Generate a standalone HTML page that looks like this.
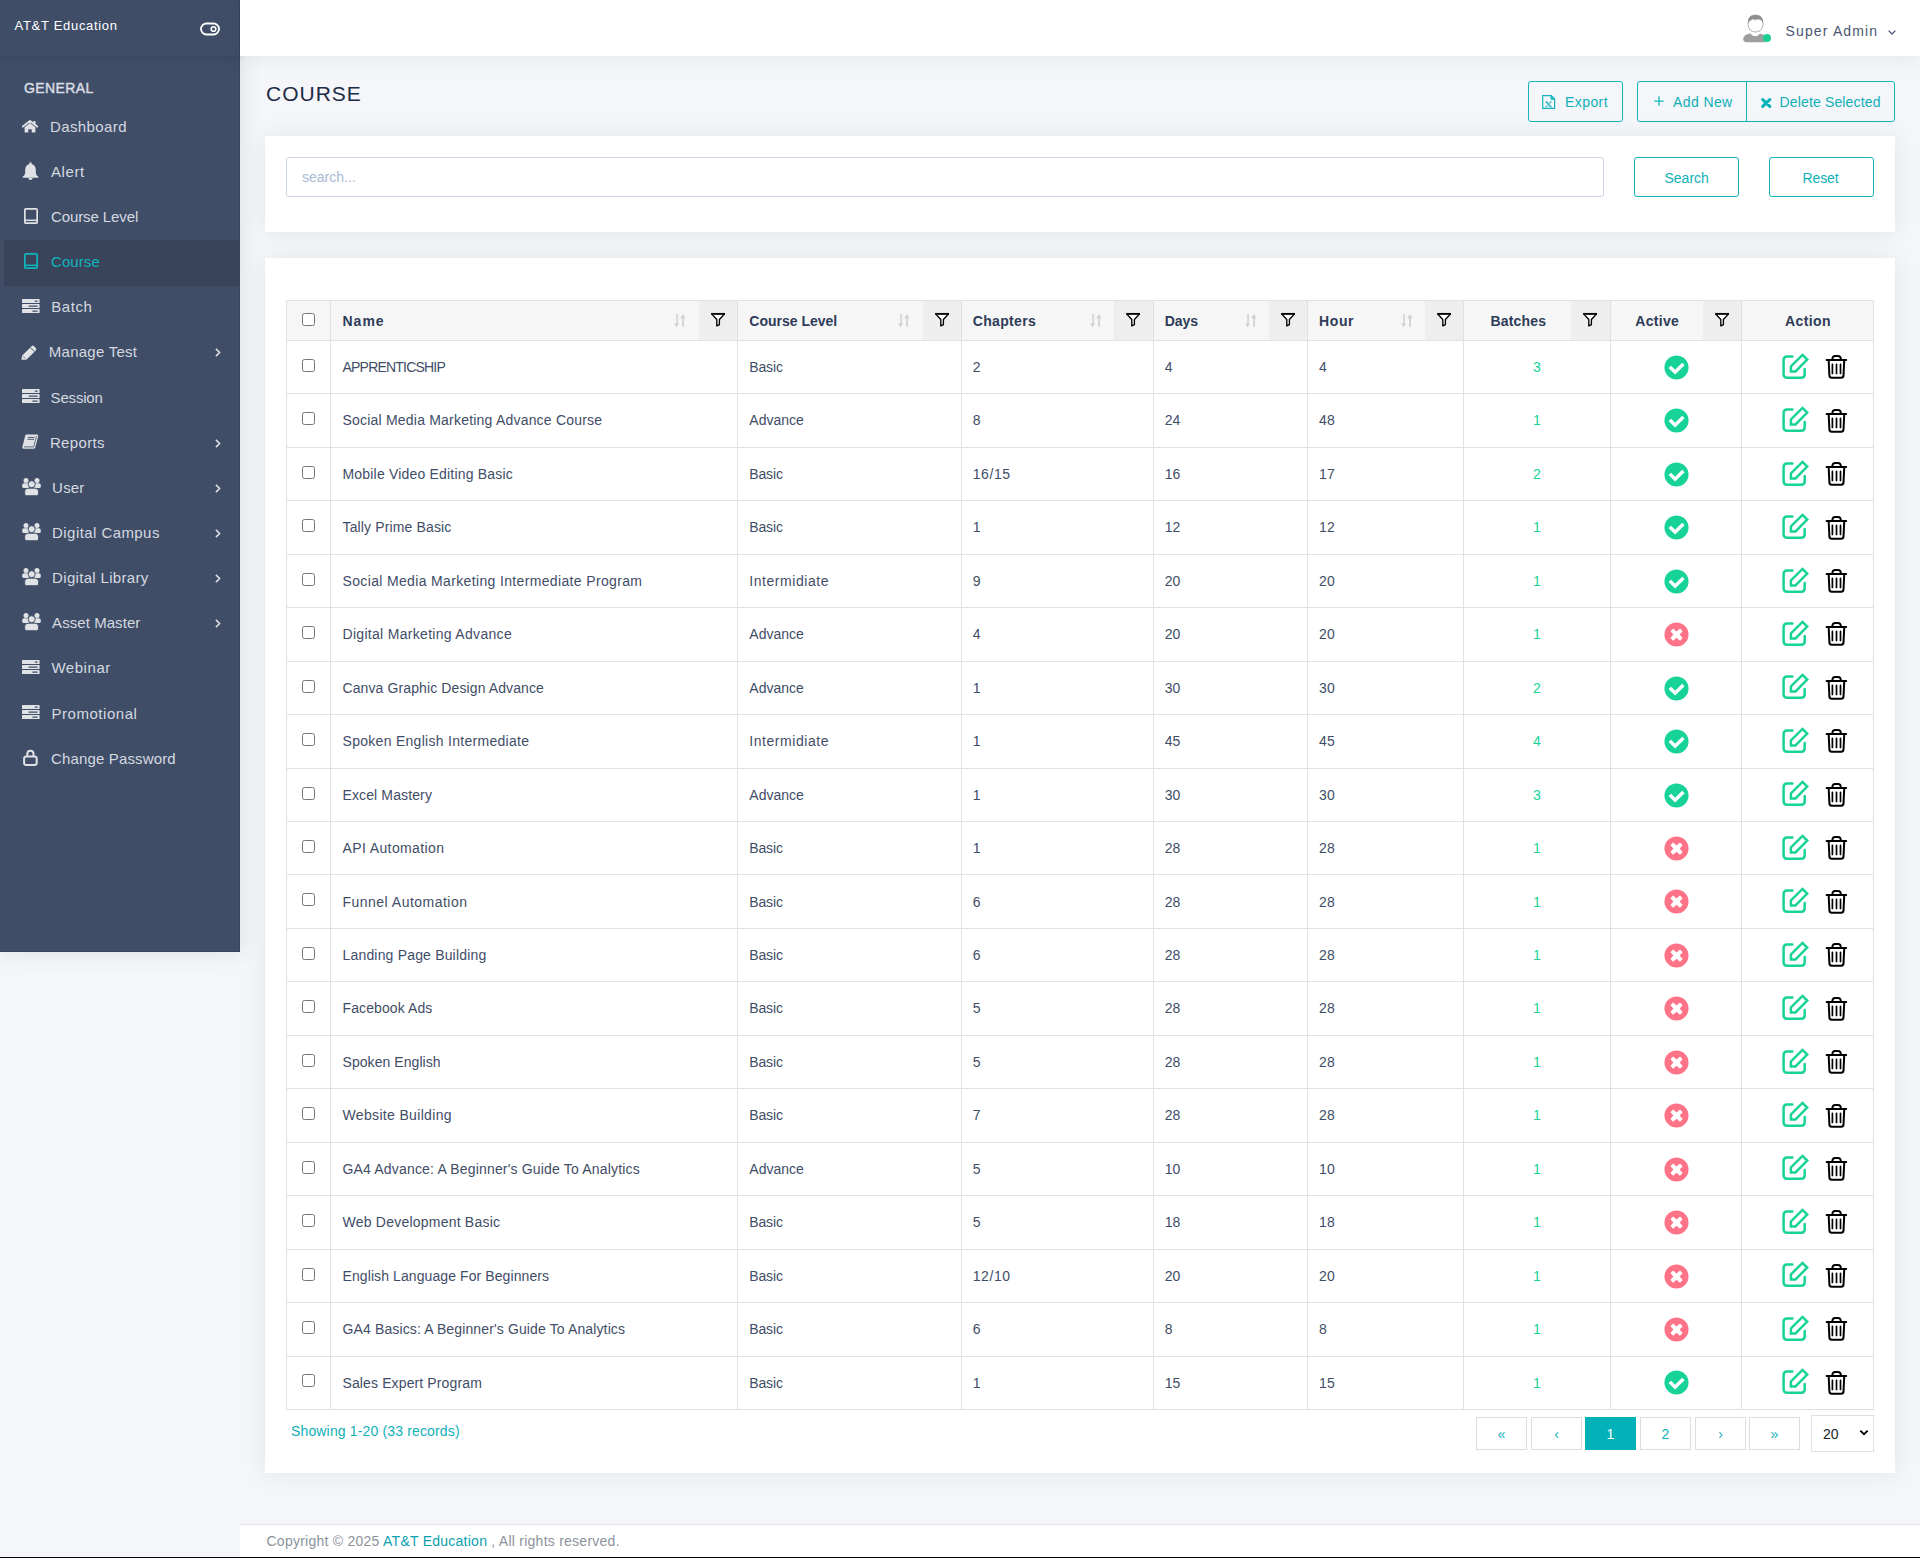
<!DOCTYPE html>
<html><head><meta charset="utf-8">
<style>
*{box-sizing:border-box;margin:0;padding:0}
html,body{width:1920px;height:1558px;overflow:hidden;-webkit-font-smoothing:antialiased}
body{background:#f4f6f9;font-family:"Liberation Sans",sans-serif;position:relative;color:#3f4d67}
.sb{position:absolute;left:0;top:0;width:240px;height:952px;background:#3f4d67;border-right:1px solid #38445d;border-bottom:1px solid #38445d;box-shadow:1px 0 20px 0 rgba(69,90,100,0.14)}
.sbhead{position:absolute;left:0;top:0;width:239px;height:56px;box-shadow:0 2px 6px rgba(40,50,70,0.25)}
.brand{position:absolute;left:14.6px;top:18px;font-size:13px;color:#fff;white-space:nowrap;letter-spacing:0.69px}
.tog{position:absolute;left:200px;top:22px}
.cap{position:absolute;left:24px;top:80px;font-size:14px;font-weight:normal;color:#d9dde4;letter-spacing:0.4px;-webkit-text-stroke:0.45px #d9dde4}
.ntx{position:absolute;font-size:15px;line-height:19px;white-space:nowrap;letter-spacing:0.2px}
.hdr{position:absolute;left:240px;top:0;width:1680px;height:56px;background:#fff;box-shadow:0 1px 20px rgba(69,90,100,0.10)}
.title{position:absolute;left:266px;top:82px;font-size:21px;color:#1e2b45;letter-spacing:1.0px}
.uname{position:absolute;left:1785.5px;top:23px;font-size:14px;color:#4a5672;letter-spacing:1.15px;white-space:nowrap}
.bt{position:absolute;font-size:14px;line-height:16px;color:#0fb0b8;white-space:nowrap;letter-spacing:0.25px}
.btn{position:absolute;border:1px solid #12b5bc;border-radius:3px;color:#0fb0b8;font-size:14px;background:transparent;white-space:nowrap}
.card{position:absolute;left:265px;width:1630px;background:#fff;box-shadow:0 1px 20px rgba(69,90,100,0.10)}
.inp{position:absolute;left:21px;top:21px;width:1318px;height:40px;border:1px solid #c9d5e4;border-radius:3px}
.inp span{position:absolute;left:15px;top:11px;font-size:14px;color:#a8bad3}
.th{position:absolute;top:312px;font-size:14px;line-height:18px;font-weight:bold;color:#2e3c58;white-space:nowrap}
.td{position:absolute;font-size:14px;line-height:18px;color:#3f4d67;white-space:nowrap}
.bn{width:100px;text-align:center;color:#17d397}
.cb{position:absolute;left:302px;width:13px;height:13px;margin:0}
.show{position:absolute;left:291px;top:1422px;font-size:14px;line-height:18px;color:#0fb0b8;white-space:nowrap;letter-spacing:0.15px}
.pg{position:absolute;top:1417px;width:51px;height:33px;border:1px solid #dee2e6;background:#fff;color:#0fb0b8;font-size:14px;line-height:33px;text-align:center;border-color:#dcdddf}
.pg.act{background:#03b1b9;border-color:#03b1b9;color:#fff}
.sel{position:absolute;left:1811px;top:1415px;width:63px;height:37px;border:1px solid #dee2e6;background:#fff}
.sel span{position:absolute;left:11px;top:9px;font-size:14px;line-height:18px;color:#212529}
.footer{position:absolute;left:240px;top:1524px;width:1680px;height:33px;background:#fff;border-top:1px solid #e3e6eb}
.footer span{position:absolute;left:26.5px;top:8px;font-size:14px;color:#8c939c;white-space:nowrap;letter-spacing:0.25px}
.footer a{color:#0b9fb0;text-decoration:none}
.bline{position:absolute;left:0;top:1557px;width:1920px;height:1px;background:#000}
</style></head>
<body>
<div class="sb">
  <div class="sbhead"></div>
  <div class="brand">AT&amp;T Education</div>
  <svg class="tog" width="20" height="14" viewBox="0 0 20 14"><rect x="1" y="1.5" width="18" height="11" rx="5.5" fill="none" stroke="#fff" stroke-width="1.8"/><circle cx="13.5" cy="7" r="2.3" fill="none" stroke="#fff" stroke-width="1.6"/></svg>
  <div class="cap">GENERAL</div>
  <svg class="ic" style="position:absolute;left:22px;top:119.6px" width="16" height="13" viewBox="0 0 16 13"><path d="M0.8 6.6 L8 0.9 L15.2 6.6" fill="none" stroke="#e0e2e6" stroke-width="1.9" stroke-linecap="round" stroke-linejoin="round"/><rect x="11.3" y="1" width="2.2" height="3.6" fill="#e0e2e6"/><path d="M2.6 7.3 L8 3 L13.4 7.3 V12.6 H9.7 V9.3 H6.3 V12.6 H2.6 Z" fill="#e0e2e6"/></svg>
<div class="ntx" style="left:50px;top:116.6px;color:#d5d9e0;letter-spacing:0.39px">Dashboard</div>
<svg class="ic" style="position:absolute;left:22px;top:162px" width="17" height="18" viewBox="0 0 17 18"><path d="M8.5 0.3c.7 0 1.1.5 1.1 1.1v.7c2.5.6 4.2 2.8 4.2 5.4v3c0 1.3.6 2.5 1.6 3.4l.8.7c.4.4.2 1.1-.4 1.1H1.2c-.6 0-.8-.7-.4-1.1l.8-.7c1-.9 1.6-2.1 1.6-3.4v-3c0-2.6 1.7-4.8 4.2-5.4v-.7c0-.6.4-1.1 1.1-1.1z" fill="#e0e2e6"/><path d="M6.4 15.9h4.2c0 1.2-.9 2-2.1 2s-2.1-.8-2.1-2z" fill="#e0e2e6"/></svg>
<div class="ntx" style="left:51px;top:161.8px;color:#d5d9e0;letter-spacing:0.6px">Alert</div>
<svg class="ic" style="position:absolute;left:24px;top:207.8px" width="14" height="16" viewBox="0 0 14 16"><rect x="0.85" y="0.85" width="12.3" height="14.3" rx="1" fill="none" stroke="#e0e2e6" stroke-width="1.7"/><path d="M0.85 12.3 H13.15" stroke="#e0e2e6" stroke-width="1.5"/></svg>
<div class="ntx" style="left:51px;top:206.9px;color:#d5d9e0;letter-spacing:-0.1px">Course Level</div>
<div style="position:absolute;left:4px;top:240px;width:235px;height:46px;background:#394359"></div>
<svg class="ic" style="position:absolute;left:24px;top:253px" width="14" height="16" viewBox="0 0 14 16"><rect x="0.85" y="0.85" width="12.3" height="14.3" rx="1" fill="none" stroke="#0fb5bd" stroke-width="1.7"/><path d="M0.85 12.3 H13.15" stroke="#0fb5bd" stroke-width="1.5"/></svg>
<div class="ntx" style="left:51px;top:252.0px;color:#0fb5bd;letter-spacing:0.08px">Course</div>
<svg class="ic" style="position:absolute;left:21.7px;top:299px" width="18" height="14" viewBox="0 0 18 14"><rect x="0" y="0" width="17.6" height="4.1" rx="0.7" fill="#e0e2e6"/><rect x="0" y="5" width="17.6" height="4.1" rx="0.7" fill="#e0e2e6"/><rect x="0" y="10" width="17.6" height="4.1" rx="0.7" fill="#e0e2e6"/><rect x="12.6" y="1.5" width="3.2" height="1.2" rx="0.6" fill="#3f4d67"/><rect x="6.4" y="6.5" width="9.4" height="1.2" rx="0.6" fill="#3f4d67"/><rect x="10.2" y="11.5" width="5.6" height="1.2" rx="0.6" fill="#3f4d67"/></svg>
<div class="ntx" style="left:51.3px;top:297.2px;color:#d5d9e0;letter-spacing:0.55px">Batch</div>
<svg class="ic" style="position:absolute;left:21.4px;top:344.7px" width="16" height="15" viewBox="0 0 16 15"><path d="M0.3 14.7 L1.2 10.6 L10.6 1.2 Q11.8 0 13 1.2 L14.8 3 Q16 4.2 14.8 5.4 L5.4 14.8 Z" fill="#e0e2e6"/><path d="M9.4 2.6 L13.4 6.6" stroke="#3f4d67" stroke-width="0.9"/><path d="M2.2 11.2 L4.4 13.4" stroke="#3f4d67" stroke-width="0.6"/></svg>
<div class="ntx" style="left:48.8px;top:342.4px;color:#d5d9e0;letter-spacing:0.25px">Manage Test</div>
<svg class="ch" style="position:absolute;left:214.5px;top:348.2px" width="6" height="9" viewBox="0 0 6 9"><path d="M0.9 0.9 L4.6 4.5 L0.9 8.1" fill="none" stroke="#e0e2e6" stroke-width="1.5"/></svg>
<svg class="ic" style="position:absolute;left:21.7px;top:389.3px" width="18" height="14" viewBox="0 0 18 14"><rect x="0" y="0" width="17.6" height="4.1" rx="0.7" fill="#e0e2e6"/><rect x="0" y="5" width="17.6" height="4.1" rx="0.7" fill="#e0e2e6"/><rect x="0" y="10" width="17.6" height="4.1" rx="0.7" fill="#e0e2e6"/><rect x="12.6" y="1.5" width="3.2" height="1.2" rx="0.6" fill="#3f4d67"/><rect x="6.4" y="6.5" width="9.4" height="1.2" rx="0.6" fill="#3f4d67"/><rect x="10.2" y="11.5" width="5.6" height="1.2" rx="0.6" fill="#3f4d67"/></svg>
<div class="ntx" style="left:50.6px;top:387.5px;color:#d5d9e0;letter-spacing:-0.18px">Session</div>
<svg class="ic" style="position:absolute;left:21.7px;top:434px" width="17" height="15" viewBox="0 0 17 15"><path d="M4.6 0.4 H14.8 Q16.6 0.6 16.2 2.4 L13.2 13.6 Q12.8 14.8 11.4 14.8 H1.6 Q0 14.6 0.4 12.8 L3.3 1.6 Q3.6 0.5 4.6 0.4Z" fill="#e0e2e6"/><path d="M5.9 3.4 H12.6 M5.4 5.3 H12" stroke="#3f4d67" stroke-width="0.9"/><path d="M2.1 12.9 H11.6 L14.6 2" fill="none" stroke="#3f4d67" stroke-width="0.8"/></svg>
<div class="ntx" style="left:49.9px;top:432.7px;color:#d5d9e0;letter-spacing:0.36px">Reports</div>
<svg class="ch" style="position:absolute;left:214.5px;top:438.6px" width="6" height="9" viewBox="0 0 6 9"><path d="M0.9 0.9 L4.6 4.5 L0.9 8.1" fill="none" stroke="#e0e2e6" stroke-width="1.5"/></svg>
<svg class="ic" style="position:absolute;left:21.5px;top:478px" width="20" height="18" viewBox="0 0 20 18"><circle cx="4" cy="2.5" r="2.5" fill="#e0e2e6"/><circle cx="15" cy="2.5" r="2.5" fill="#e0e2e6"/><path d="M0.2 7 Q0.2 5.2 2 5.2 H7 V9.9 H1.7 Q0.2 9.9 0.2 8.4Z" fill="#e0e2e6"/><path d="M18.8 7 Q18.8 5.2 17 5.2 H12 V9.9 H17.3 Q18.8 9.9 18.8 8.4Z" fill="#e0e2e6"/><circle cx="9.7" cy="6.2" r="3.5" fill="#e0e2e6" stroke="#3f4d67" stroke-width="0.9"/><path d="M2.7 15.9 V13.5 Q2.7 10.2 6 10.2 H13.2 Q16.5 10.2 16.5 13.5 V15.9 Q16.5 17.7 14.7 17.7 H4.5 Q2.7 17.7 2.7 15.9Z" fill="#e0e2e6" stroke="#3f4d67" stroke-width="0.9"/></svg>
<div class="ntx" style="left:52.1px;top:477.8px;color:#d5d9e0;letter-spacing:0.2px">User</div>
<svg class="ch" style="position:absolute;left:214.5px;top:483.7px" width="6" height="9" viewBox="0 0 6 9"><path d="M0.9 0.9 L4.6 4.5 L0.9 8.1" fill="none" stroke="#e0e2e6" stroke-width="1.5"/></svg>
<svg class="ic" style="position:absolute;left:21.5px;top:523.1px" width="20" height="18" viewBox="0 0 20 18"><circle cx="4" cy="2.5" r="2.5" fill="#e0e2e6"/><circle cx="15" cy="2.5" r="2.5" fill="#e0e2e6"/><path d="M0.2 7 Q0.2 5.2 2 5.2 H7 V9.9 H1.7 Q0.2 9.9 0.2 8.4Z" fill="#e0e2e6"/><path d="M18.8 7 Q18.8 5.2 17 5.2 H12 V9.9 H17.3 Q18.8 9.9 18.8 8.4Z" fill="#e0e2e6"/><circle cx="9.7" cy="6.2" r="3.5" fill="#e0e2e6" stroke="#3f4d67" stroke-width="0.9"/><path d="M2.7 15.9 V13.5 Q2.7 10.2 6 10.2 H13.2 Q16.5 10.2 16.5 13.5 V15.9 Q16.5 17.7 14.7 17.7 H4.5 Q2.7 17.7 2.7 15.9Z" fill="#e0e2e6" stroke="#3f4d67" stroke-width="0.9"/></svg>
<div class="ntx" style="left:52.1px;top:522.9px;color:#d5d9e0;letter-spacing:0.43px">Digital Campus</div>
<svg class="ch" style="position:absolute;left:214.5px;top:528.8px" width="6" height="9" viewBox="0 0 6 9"><path d="M0.9 0.9 L4.6 4.5 L0.9 8.1" fill="none" stroke="#e0e2e6" stroke-width="1.5"/></svg>
<svg class="ic" style="position:absolute;left:21.5px;top:568.3px" width="20" height="18" viewBox="0 0 20 18"><circle cx="4" cy="2.5" r="2.5" fill="#e0e2e6"/><circle cx="15" cy="2.5" r="2.5" fill="#e0e2e6"/><path d="M0.2 7 Q0.2 5.2 2 5.2 H7 V9.9 H1.7 Q0.2 9.9 0.2 8.4Z" fill="#e0e2e6"/><path d="M18.8 7 Q18.8 5.2 17 5.2 H12 V9.9 H17.3 Q18.8 9.9 18.8 8.4Z" fill="#e0e2e6"/><circle cx="9.7" cy="6.2" r="3.5" fill="#e0e2e6" stroke="#3f4d67" stroke-width="0.9"/><path d="M2.7 15.9 V13.5 Q2.7 10.2 6 10.2 H13.2 Q16.5 10.2 16.5 13.5 V15.9 Q16.5 17.7 14.7 17.7 H4.5 Q2.7 17.7 2.7 15.9Z" fill="#e0e2e6" stroke="#3f4d67" stroke-width="0.9"/></svg>
<div class="ntx" style="left:52.1px;top:568.1px;color:#d5d9e0;letter-spacing:0.32px">Digital Library</div>
<svg class="ch" style="position:absolute;left:214.5px;top:574.0px" width="6" height="9" viewBox="0 0 6 9"><path d="M0.9 0.9 L4.6 4.5 L0.9 8.1" fill="none" stroke="#e0e2e6" stroke-width="1.5"/></svg>
<svg class="ic" style="position:absolute;left:21.5px;top:613.4px" width="20" height="18" viewBox="0 0 20 18"><circle cx="4" cy="2.5" r="2.5" fill="#e0e2e6"/><circle cx="15" cy="2.5" r="2.5" fill="#e0e2e6"/><path d="M0.2 7 Q0.2 5.2 2 5.2 H7 V9.9 H1.7 Q0.2 9.9 0.2 8.4Z" fill="#e0e2e6"/><path d="M18.8 7 Q18.8 5.2 17 5.2 H12 V9.9 H17.3 Q18.8 9.9 18.8 8.4Z" fill="#e0e2e6"/><circle cx="9.7" cy="6.2" r="3.5" fill="#e0e2e6" stroke="#3f4d67" stroke-width="0.9"/><path d="M2.7 15.9 V13.5 Q2.7 10.2 6 10.2 H13.2 Q16.5 10.2 16.5 13.5 V15.9 Q16.5 17.7 14.7 17.7 H4.5 Q2.7 17.7 2.7 15.9Z" fill="#e0e2e6" stroke="#3f4d67" stroke-width="0.9"/></svg>
<div class="ntx" style="left:52.1px;top:613.2px;color:#d5d9e0;letter-spacing:0.06px">Asset Master</div>
<svg class="ch" style="position:absolute;left:214.5px;top:619.1px" width="6" height="9" viewBox="0 0 6 9"><path d="M0.9 0.9 L4.6 4.5 L0.9 8.1" fill="none" stroke="#e0e2e6" stroke-width="1.5"/></svg>
<svg class="ic" style="position:absolute;left:21.7px;top:660.2px" width="18" height="14" viewBox="0 0 18 14"><rect x="0" y="0" width="17.6" height="4.1" rx="0.7" fill="#e0e2e6"/><rect x="0" y="5" width="17.6" height="4.1" rx="0.7" fill="#e0e2e6"/><rect x="0" y="10" width="17.6" height="4.1" rx="0.7" fill="#e0e2e6"/><rect x="12.6" y="1.5" width="3.2" height="1.2" rx="0.6" fill="#3f4d67"/><rect x="6.4" y="6.5" width="9.4" height="1.2" rx="0.6" fill="#3f4d67"/><rect x="10.2" y="11.5" width="5.6" height="1.2" rx="0.6" fill="#3f4d67"/></svg>
<div class="ntx" style="left:51.4px;top:658.4px;color:#d5d9e0;letter-spacing:0.55px">Webinar</div>
<svg class="ic" style="position:absolute;left:21.7px;top:705.3px" width="18" height="14" viewBox="0 0 18 14"><rect x="0" y="0" width="17.6" height="4.1" rx="0.7" fill="#e0e2e6"/><rect x="0" y="5" width="17.6" height="4.1" rx="0.7" fill="#e0e2e6"/><rect x="0" y="10" width="17.6" height="4.1" rx="0.7" fill="#e0e2e6"/><rect x="12.6" y="1.5" width="3.2" height="1.2" rx="0.6" fill="#3f4d67"/><rect x="6.4" y="6.5" width="9.4" height="1.2" rx="0.6" fill="#3f4d67"/><rect x="10.2" y="11.5" width="5.6" height="1.2" rx="0.6" fill="#3f4d67"/></svg>
<div class="ntx" style="left:51.4px;top:703.5px;color:#d5d9e0;letter-spacing:0.55px">Promotional</div>
<svg class="ic" style="position:absolute;left:23.1px;top:749.4px" width="15" height="17" viewBox="0 0 15 17"><rect x="1.1" y="7.5" width="12.6" height="8.4" rx="2.2" fill="none" stroke="#e0e2e6" stroke-width="2"/><path d="M4.3 7.5 V4.8 A3.1 3.1 0 0 1 10.5 4.8 V7.5" fill="none" stroke="#e0e2e6" stroke-width="2"/></svg>
<div class="ntx" style="left:51px;top:748.7px;color:#d5d9e0;letter-spacing:0.15px">Change Password</div>
</div>
<div class="hdr"></div>
<svg style="position:absolute;left:1742px;top:14px" width="30" height="30" viewBox="0 0 30 30">
 <path d="M1.2 24.2 Q3 20 8.5 19.6 Q10 22.2 13.3 22.2 Q16.6 22.2 18 19.6 Q21.5 19.9 23 22.5 V28.2 H4.5 Q2.2 28.2 1.2 26Z" fill="#9e9e9e"/>
 <path d="M6.3 8.5 Q6.3 1 13.5 1 Q20.7 1 20.7 8.5 Q21.6 9 21 10.6 Q20.2 16.5 16.5 17.4 Q13.5 18.7 10.5 17.4 Q7 16.5 6.1 10.6 Q5.4 9 6.3 8.5Z" fill="#fff" stroke="#777" stroke-width="0.6"/>
 <path d="M5.9 9.8 Q5.2 1 13.5 0.9 Q21.7 1 21.1 9.8 Q20.2 6.8 18.6 6 Q17 4.6 15.6 5.8 Q14.4 4.4 13.2 6.4 Q11 4.2 9.2 6.3 Q7 7 5.9 9.8Z" fill="#8f8f8f"/>
 <circle cx="25" cy="24" r="4" fill="#1ccf8f"/>
</svg>
<div class="uname">Super Admin</div>
<svg style="position:absolute;left:1888px;top:30px" width="8" height="5" viewBox="0 0 8 5"><path d="M0.6 0.6 L4 4 L7.4 0.6" fill="none" stroke="#4a5672" stroke-width="1.3"/></svg>
<div class="title">COURSE</div>
<div class="btn" style="left:1528px;top:81px;width:95px;height:41px"></div>
<svg style="position:absolute;left:1542px;top:95px" width="14" height="14" viewBox="0 0 14 14"><path d="M0.7 0.7 H9.3 L12.6 4 V13.3 H0.7 Z" fill="none" stroke="#12b5bc" stroke-width="1.2"/><path d="M9 0.7 V4.3 H12.6" fill="none" stroke="#12b5bc" stroke-width="1"/><path d="M9.2 1 L12.3 4.1 L9.2 4.1Z" fill="#12b5bc"/><path d="M4.3 6.9 L8.9 11.7" stroke="#12b5bc" stroke-width="1.3"/><path d="M8.7 6.9 L4.3 11.7" stroke="#12b5bc" stroke-width="0.9"/><path d="M3.2 6.9 H5.6 M7.7 6.9 H9.8 M3.2 11.7 H5.4 M7.6 11.7 H10" stroke="#12b5bc" stroke-width="0.8"/></svg>
<div class="bt" style="left:1565px;top:94px;letter-spacing:0.42px">Export</div>
<div class="btn" style="left:1637px;top:81px;width:258px;height:41px"></div>
<div style="position:absolute;left:1746px;top:81px;width:1px;height:41px;background:#12b5bc"></div>
<svg style="position:absolute;left:1654px;top:96px" width="10" height="10" viewBox="0 0 10 10"><path d="M5 0.3 V9.7 M0.3 5 H9.7" stroke="#12b5bc" stroke-width="1.25"/></svg>
<div class="bt" style="left:1673px;top:94px;letter-spacing:0.4px">Add New</div>
<svg style="position:absolute;left:1761px;top:97.5px" width="10.5" height="10" viewBox="0 0 10.5 10"><path d="M1.7 1.6 L8.8 8.4 M8.8 1.6 L1.7 8.4" stroke="#04b4b9" stroke-width="3" stroke-linecap="round"/></svg>
<div class="bt" style="left:1779.5px;top:94px;letter-spacing:0.15px">Delete Selected</div>
<div class="card" style="top:136px;height:96px">
  <div class="inp"><span>search...</span></div>
  <div class="btn" style="left:1369px;top:21px;width:105px;height:40px;color:#0fb0b8"><div class="bt" style="left:29.5px;top:12px;letter-spacing:0">Search</div></div>
<div class="btn" style="left:1504px;top:21px;width:105px;height:40px;color:#0fb0b8"><div class="bt" style="left:32.5px;top:12px;letter-spacing:-0.1px">Reset</div></div>
</div>
<div class="card" style="top:258px;height:1215px"></div>
<div style="position:absolute;left:286px;top:300px;width:1588px;height:40px;background:#f6f6f6"></div>
<div style="position:absolute;left:699px;top:300px;width:38px;height:40px;background:#eeeeee"></div>
<svg style="position:absolute;left:710px;top:312px" width="16" height="16" viewBox="0 0 16 16"><path d="M1.6 1.9 L6.8 7.5 V13.9 L9.4 12.6 V7.5 L14.6 1.9" fill="#fff" stroke="#000" stroke-width="1.35" stroke-linejoin="round"/><path d="M1.2 1.9 H15" stroke="#000" stroke-width="1.9"/></svg>
<div style="position:absolute;left:923px;top:300px;width:38px;height:40px;background:#eeeeee"></div>
<svg style="position:absolute;left:934px;top:312px" width="16" height="16" viewBox="0 0 16 16"><path d="M1.6 1.9 L6.8 7.5 V13.9 L9.4 12.6 V7.5 L14.6 1.9" fill="#fff" stroke="#000" stroke-width="1.35" stroke-linejoin="round"/><path d="M1.2 1.9 H15" stroke="#000" stroke-width="1.9"/></svg>
<div style="position:absolute;left:1114px;top:300px;width:39px;height:40px;background:#eeeeee"></div>
<svg style="position:absolute;left:1125px;top:312px" width="16" height="16" viewBox="0 0 16 16"><path d="M1.6 1.9 L6.8 7.5 V13.9 L9.4 12.6 V7.5 L14.6 1.9" fill="#fff" stroke="#000" stroke-width="1.35" stroke-linejoin="round"/><path d="M1.2 1.9 H15" stroke="#000" stroke-width="1.9"/></svg>
<div style="position:absolute;left:1269px;top:300px;width:38px;height:40px;background:#eeeeee"></div>
<svg style="position:absolute;left:1280px;top:312px" width="16" height="16" viewBox="0 0 16 16"><path d="M1.6 1.9 L6.8 7.5 V13.9 L9.4 12.6 V7.5 L14.6 1.9" fill="#fff" stroke="#000" stroke-width="1.35" stroke-linejoin="round"/><path d="M1.2 1.9 H15" stroke="#000" stroke-width="1.9"/></svg>
<div style="position:absolute;left:1425px;top:300px;width:38px;height:40px;background:#eeeeee"></div>
<svg style="position:absolute;left:1436px;top:312px" width="16" height="16" viewBox="0 0 16 16"><path d="M1.6 1.9 L6.8 7.5 V13.9 L9.4 12.6 V7.5 L14.6 1.9" fill="#fff" stroke="#000" stroke-width="1.35" stroke-linejoin="round"/><path d="M1.2 1.9 H15" stroke="#000" stroke-width="1.9"/></svg>
<div style="position:absolute;left:1571px;top:300px;width:39px;height:40px;background:#eeeeee"></div>
<svg style="position:absolute;left:1582px;top:312px" width="16" height="16" viewBox="0 0 16 16"><path d="M1.6 1.9 L6.8 7.5 V13.9 L9.4 12.6 V7.5 L14.6 1.9" fill="#fff" stroke="#000" stroke-width="1.35" stroke-linejoin="round"/><path d="M1.2 1.9 H15" stroke="#000" stroke-width="1.9"/></svg>
<div style="position:absolute;left:1703px;top:300px;width:38px;height:40px;background:#eeeeee"></div>
<svg style="position:absolute;left:1714px;top:312px" width="16" height="16" viewBox="0 0 16 16"><path d="M1.6 1.9 L6.8 7.5 V13.9 L9.4 12.6 V7.5 L14.6 1.9" fill="#fff" stroke="#000" stroke-width="1.35" stroke-linejoin="round"/><path d="M1.2 1.9 H15" stroke="#000" stroke-width="1.9"/></svg>
<div style="position:absolute;left:286px;top:300px;width:1588px;height:1px;background:#dee2e6"></div>
<div style="position:absolute;left:286px;top:340px;width:1588px;height:1px;background:#dee2e6"></div>
<div style="position:absolute;left:286px;top:393px;width:1588px;height:1px;background:#dee2e6"></div>
<div style="position:absolute;left:286px;top:447px;width:1588px;height:1px;background:#dee2e6"></div>
<div style="position:absolute;left:286px;top:500px;width:1588px;height:1px;background:#dee2e6"></div>
<div style="position:absolute;left:286px;top:554px;width:1588px;height:1px;background:#dee2e6"></div>
<div style="position:absolute;left:286px;top:607px;width:1588px;height:1px;background:#dee2e6"></div>
<div style="position:absolute;left:286px;top:661px;width:1588px;height:1px;background:#dee2e6"></div>
<div style="position:absolute;left:286px;top:714px;width:1588px;height:1px;background:#dee2e6"></div>
<div style="position:absolute;left:286px;top:768px;width:1588px;height:1px;background:#dee2e6"></div>
<div style="position:absolute;left:286px;top:821px;width:1588px;height:1px;background:#dee2e6"></div>
<div style="position:absolute;left:286px;top:874px;width:1588px;height:1px;background:#dee2e6"></div>
<div style="position:absolute;left:286px;top:928px;width:1588px;height:1px;background:#dee2e6"></div>
<div style="position:absolute;left:286px;top:981px;width:1588px;height:1px;background:#dee2e6"></div>
<div style="position:absolute;left:286px;top:1035px;width:1588px;height:1px;background:#dee2e6"></div>
<div style="position:absolute;left:286px;top:1088px;width:1588px;height:1px;background:#dee2e6"></div>
<div style="position:absolute;left:286px;top:1142px;width:1588px;height:1px;background:#dee2e6"></div>
<div style="position:absolute;left:286px;top:1195px;width:1588px;height:1px;background:#dee2e6"></div>
<div style="position:absolute;left:286px;top:1249px;width:1588px;height:1px;background:#dee2e6"></div>
<div style="position:absolute;left:286px;top:1302px;width:1588px;height:1px;background:#dee2e6"></div>
<div style="position:absolute;left:286px;top:1356px;width:1588px;height:1px;background:#dee2e6"></div>
<div style="position:absolute;left:286px;top:1409px;width:1588px;height:1px;background:#dee2e6"></div>
<div style="position:absolute;left:286px;top:300px;width:1px;height:1110px;background:#dee2e6"></div>
<div style="position:absolute;left:330px;top:300px;width:1px;height:1110px;background:#dee2e6"></div>
<div style="position:absolute;left:737px;top:300px;width:1px;height:1110px;background:#dee2e6"></div>
<div style="position:absolute;left:961px;top:300px;width:1px;height:1110px;background:#dee2e6"></div>
<div style="position:absolute;left:1153px;top:300px;width:1px;height:1110px;background:#dee2e6"></div>
<div style="position:absolute;left:1307px;top:300px;width:1px;height:1110px;background:#dee2e6"></div>
<div style="position:absolute;left:1463px;top:300px;width:1px;height:1110px;background:#dee2e6"></div>
<div style="position:absolute;left:1610px;top:300px;width:1px;height:1110px;background:#dee2e6"></div>
<div style="position:absolute;left:1741px;top:300px;width:1px;height:1110px;background:#dee2e6"></div>
<div style="position:absolute;left:1873px;top:300px;width:1px;height:1110px;background:#dee2e6"></div>
<input type="checkbox" class="cb" style="top:313px">
<div class="th" style="left:342.5px;letter-spacing:1.0px">Name</div>
<div class="th" style="left:749.3px;letter-spacing:0px">Course Level</div>
<div class="th" style="left:972.7px;letter-spacing:0.35px">Chapters</div>
<div class="th" style="left:1164.7px;letter-spacing:0px">Days</div>
<div class="th" style="left:1319.1px;letter-spacing:0.6px">Hour</div>
<div class="th" style="left:1490.5px;letter-spacing:0.17px">Batches</div>
<div class="th" style="left:1635.3px;letter-spacing:0.31px">Active</div>
<div class="th" style="left:1785px;letter-spacing:0.39px">Action</div>
<svg style="position:absolute;left:673px;top:313px" width="14" height="16" viewBox="0 0 14 16"><rect x="3.3" y="1" width="1.5" height="10.5" fill="#cdcfd3"/><polygon points="1.2,10.4 5.8,10.4 3.5,14.2" fill="#cdcfd3"/><rect x="9.3" y="5" width="1.6" height="8.8" fill="#cdcfd3"/><polygon points="7.2,5.3 12.3,5.3 9.9,1.2" fill="#cdcfd3"/></svg>
<svg style="position:absolute;left:897px;top:313px" width="14" height="16" viewBox="0 0 14 16"><rect x="3.3" y="1" width="1.5" height="10.5" fill="#cdcfd3"/><polygon points="1.2,10.4 5.8,10.4 3.5,14.2" fill="#cdcfd3"/><rect x="9.3" y="5" width="1.6" height="8.8" fill="#cdcfd3"/><polygon points="7.2,5.3 12.3,5.3 9.9,1.2" fill="#cdcfd3"/></svg>
<svg style="position:absolute;left:1089px;top:313px" width="14" height="16" viewBox="0 0 14 16"><rect x="3.3" y="1" width="1.5" height="10.5" fill="#cdcfd3"/><polygon points="1.2,10.4 5.8,10.4 3.5,14.2" fill="#cdcfd3"/><rect x="9.3" y="5" width="1.6" height="8.8" fill="#cdcfd3"/><polygon points="7.2,5.3 12.3,5.3 9.9,1.2" fill="#cdcfd3"/></svg>
<svg style="position:absolute;left:1244px;top:313px" width="14" height="16" viewBox="0 0 14 16"><rect x="3.3" y="1" width="1.5" height="10.5" fill="#cdcfd3"/><polygon points="1.2,10.4 5.8,10.4 3.5,14.2" fill="#cdcfd3"/><rect x="9.3" y="5" width="1.6" height="8.8" fill="#cdcfd3"/><polygon points="7.2,5.3 12.3,5.3 9.9,1.2" fill="#cdcfd3"/></svg>
<svg style="position:absolute;left:1400px;top:313px" width="14" height="16" viewBox="0 0 14 16"><rect x="3.3" y="1" width="1.5" height="10.5" fill="#cdcfd3"/><polygon points="1.2,10.4 5.8,10.4 3.5,14.2" fill="#cdcfd3"/><rect x="9.3" y="5" width="1.6" height="8.8" fill="#cdcfd3"/><polygon points="7.2,5.3 12.3,5.3 9.9,1.2" fill="#cdcfd3"/></svg>
<input type="checkbox" class="cb" style="top:358.93px">
<div class="td" style="left:342.5px;top:358.03px;letter-spacing:-0.793px;">APPRENTICSHIP</div>
<div class="td" style="left:749.3px;top:358.03px;letter-spacing:-0.15px;">Basic</div>
<div class="td" style="left:972.7px;top:358.03px;">2</div>
<div class="td" style="left:1164.7px;top:358.03px;">4</div>
<div class="td" style="left:1319.1px;top:358.03px;">4</div>
<div class="td bn" style="left:1487px;top:358.03px">3</div>
<svg style="position:absolute;left:1663.80px;top:354.93px" width="25" height="25" viewBox="0 0 25 25"><circle cx="12.5" cy="12.5" r="12.05" fill="#17d397"/><polygon points="4.50,13.05 7.10,10.75 11.10,14.65 18.20,7.75 20.60,10.15 11.10,19.55" fill="#fff"/></svg>
<svg style="position:absolute;left:1782px;top:352.73px" width="28" height="28" viewBox="0 0 28 28"><path d="M10.4 3.4 H5.1 Q1.6 3.4 1.6 6.9 V21.2 Q1.6 24.7 5.1 24.7 H19.2 Q22.7 24.7 22.7 21.2 V16.1" fill="none" stroke="#17d397" stroke-width="2.5" stroke-linecap="round"/><path d="M8.9 18.5 H13.5 L25.2 6.6 L20.5 1.9 L8.9 13.4 Z" fill="none" stroke="#17d397" stroke-width="2.5" stroke-linejoin="miter"/></svg>
<svg style="position:absolute;left:1824px;top:352.23px" width="26" height="28" viewBox="0 0 26 28"><path d="M2.6 8 H22.2" stroke="#000" stroke-width="2" stroke-linecap="round"/><path d="M8.35 8 V7 Q8.5 4 11.2 4 H14 Q16.7 4 16.85 7 V8" fill="none" stroke="#000" stroke-width="1.9"/><path d="M4.7 9 L5.4 23.7 Q5.6 25.7 7.6 25.7 H17.3 Q19.3 25.7 19.5 23.7 L20.2 9" fill="none" stroke="#000" stroke-width="2"/><path d="M8.4 12.4 V21.5 M12.5 12.4 V21.5 M16.5 12.4 V21.5" stroke="#000" stroke-width="1.7" stroke-linecap="round"/></svg>
<input type="checkbox" class="cb" style="top:412.38px">
<div class="td" style="left:342.5px;top:411.48px;letter-spacing:0.207px;">Social Media Marketing Advance Course</div>
<div class="td" style="left:749.3px;top:411.48px;">Advance</div>
<div class="td" style="left:972.7px;top:411.48px;">8</div>
<div class="td" style="left:1164.7px;top:411.48px;">24</div>
<div class="td" style="left:1319.1px;top:411.48px;">48</div>
<div class="td bn" style="left:1487px;top:411.48px">1</div>
<svg style="position:absolute;left:1663.80px;top:408.38px" width="25" height="25" viewBox="0 0 25 25"><circle cx="12.5" cy="12.5" r="12.05" fill="#17d397"/><polygon points="4.50,13.05 7.10,10.75 11.10,14.65 18.20,7.75 20.60,10.15 11.10,19.55" fill="#fff"/></svg>
<svg style="position:absolute;left:1782px;top:406.18px" width="28" height="28" viewBox="0 0 28 28"><path d="M10.4 3.4 H5.1 Q1.6 3.4 1.6 6.9 V21.2 Q1.6 24.7 5.1 24.7 H19.2 Q22.7 24.7 22.7 21.2 V16.1" fill="none" stroke="#17d397" stroke-width="2.5" stroke-linecap="round"/><path d="M8.9 18.5 H13.5 L25.2 6.6 L20.5 1.9 L8.9 13.4 Z" fill="none" stroke="#17d397" stroke-width="2.5" stroke-linejoin="miter"/></svg>
<svg style="position:absolute;left:1824px;top:405.68px" width="26" height="28" viewBox="0 0 26 28"><path d="M2.6 8 H22.2" stroke="#000" stroke-width="2" stroke-linecap="round"/><path d="M8.35 8 V7 Q8.5 4 11.2 4 H14 Q16.7 4 16.85 7 V8" fill="none" stroke="#000" stroke-width="1.9"/><path d="M4.7 9 L5.4 23.7 Q5.6 25.7 7.6 25.7 H17.3 Q19.3 25.7 19.5 23.7 L20.2 9" fill="none" stroke="#000" stroke-width="2"/><path d="M8.4 12.4 V21.5 M12.5 12.4 V21.5 M16.5 12.4 V21.5" stroke="#000" stroke-width="1.7" stroke-linecap="round"/></svg>
<input type="checkbox" class="cb" style="top:465.82px">
<div class="td" style="left:342.5px;top:464.93px;letter-spacing:0.187px;">Mobile Video Editing Basic</div>
<div class="td" style="left:749.3px;top:464.93px;letter-spacing:-0.15px;">Basic</div>
<div class="td" style="left:972.7px;top:464.93px;letter-spacing:0.6px;">16/15</div>
<div class="td" style="left:1164.7px;top:464.93px;">16</div>
<div class="td" style="left:1319.1px;top:464.93px;">17</div>
<div class="td bn" style="left:1487px;top:464.93px">2</div>
<svg style="position:absolute;left:1663.80px;top:461.82px" width="25" height="25" viewBox="0 0 25 25"><circle cx="12.5" cy="12.5" r="12.05" fill="#17d397"/><polygon points="4.50,13.05 7.10,10.75 11.10,14.65 18.20,7.75 20.60,10.15 11.10,19.55" fill="#fff"/></svg>
<svg style="position:absolute;left:1782px;top:459.62px" width="28" height="28" viewBox="0 0 28 28"><path d="M10.4 3.4 H5.1 Q1.6 3.4 1.6 6.9 V21.2 Q1.6 24.7 5.1 24.7 H19.2 Q22.7 24.7 22.7 21.2 V16.1" fill="none" stroke="#17d397" stroke-width="2.5" stroke-linecap="round"/><path d="M8.9 18.5 H13.5 L25.2 6.6 L20.5 1.9 L8.9 13.4 Z" fill="none" stroke="#17d397" stroke-width="2.5" stroke-linejoin="miter"/></svg>
<svg style="position:absolute;left:1824px;top:459.12px" width="26" height="28" viewBox="0 0 26 28"><path d="M2.6 8 H22.2" stroke="#000" stroke-width="2" stroke-linecap="round"/><path d="M8.35 8 V7 Q8.5 4 11.2 4 H14 Q16.7 4 16.85 7 V8" fill="none" stroke="#000" stroke-width="1.9"/><path d="M4.7 9 L5.4 23.7 Q5.6 25.7 7.6 25.7 H17.3 Q19.3 25.7 19.5 23.7 L20.2 9" fill="none" stroke="#000" stroke-width="2"/><path d="M8.4 12.4 V21.5 M12.5 12.4 V21.5 M16.5 12.4 V21.5" stroke="#000" stroke-width="1.7" stroke-linecap="round"/></svg>
<input type="checkbox" class="cb" style="top:519.28px">
<div class="td" style="left:342.5px;top:518.38px;letter-spacing:0.138px;">Tally Prime Basic</div>
<div class="td" style="left:749.3px;top:518.38px;letter-spacing:-0.15px;">Basic</div>
<div class="td" style="left:972.7px;top:518.38px;">1</div>
<div class="td" style="left:1164.7px;top:518.38px;">12</div>
<div class="td" style="left:1319.1px;top:518.38px;">12</div>
<div class="td bn" style="left:1487px;top:518.38px">1</div>
<svg style="position:absolute;left:1663.80px;top:515.28px" width="25" height="25" viewBox="0 0 25 25"><circle cx="12.5" cy="12.5" r="12.05" fill="#17d397"/><polygon points="4.50,13.05 7.10,10.75 11.10,14.65 18.20,7.75 20.60,10.15 11.10,19.55" fill="#fff"/></svg>
<svg style="position:absolute;left:1782px;top:513.08px" width="28" height="28" viewBox="0 0 28 28"><path d="M10.4 3.4 H5.1 Q1.6 3.4 1.6 6.9 V21.2 Q1.6 24.7 5.1 24.7 H19.2 Q22.7 24.7 22.7 21.2 V16.1" fill="none" stroke="#17d397" stroke-width="2.5" stroke-linecap="round"/><path d="M8.9 18.5 H13.5 L25.2 6.6 L20.5 1.9 L8.9 13.4 Z" fill="none" stroke="#17d397" stroke-width="2.5" stroke-linejoin="miter"/></svg>
<svg style="position:absolute;left:1824px;top:512.58px" width="26" height="28" viewBox="0 0 26 28"><path d="M2.6 8 H22.2" stroke="#000" stroke-width="2" stroke-linecap="round"/><path d="M8.35 8 V7 Q8.5 4 11.2 4 H14 Q16.7 4 16.85 7 V8" fill="none" stroke="#000" stroke-width="1.9"/><path d="M4.7 9 L5.4 23.7 Q5.6 25.7 7.6 25.7 H17.3 Q19.3 25.7 19.5 23.7 L20.2 9" fill="none" stroke="#000" stroke-width="2"/><path d="M8.4 12.4 V21.5 M12.5 12.4 V21.5 M16.5 12.4 V21.5" stroke="#000" stroke-width="1.7" stroke-linecap="round"/></svg>
<input type="checkbox" class="cb" style="top:572.73px">
<div class="td" style="left:342.5px;top:571.82px;letter-spacing:0.35px;">Social Media Marketing Intermediate Program</div>
<div class="td" style="left:749.3px;top:571.82px;letter-spacing:0.55px;">Intermidiate</div>
<div class="td" style="left:972.7px;top:571.82px;">9</div>
<div class="td" style="left:1164.7px;top:571.82px;">20</div>
<div class="td" style="left:1319.1px;top:571.82px;">20</div>
<div class="td bn" style="left:1487px;top:571.82px">1</div>
<svg style="position:absolute;left:1663.80px;top:568.73px" width="25" height="25" viewBox="0 0 25 25"><circle cx="12.5" cy="12.5" r="12.05" fill="#17d397"/><polygon points="4.50,13.05 7.10,10.75 11.10,14.65 18.20,7.75 20.60,10.15 11.10,19.55" fill="#fff"/></svg>
<svg style="position:absolute;left:1782px;top:566.52px" width="28" height="28" viewBox="0 0 28 28"><path d="M10.4 3.4 H5.1 Q1.6 3.4 1.6 6.9 V21.2 Q1.6 24.7 5.1 24.7 H19.2 Q22.7 24.7 22.7 21.2 V16.1" fill="none" stroke="#17d397" stroke-width="2.5" stroke-linecap="round"/><path d="M8.9 18.5 H13.5 L25.2 6.6 L20.5 1.9 L8.9 13.4 Z" fill="none" stroke="#17d397" stroke-width="2.5" stroke-linejoin="miter"/></svg>
<svg style="position:absolute;left:1824px;top:566.02px" width="26" height="28" viewBox="0 0 26 28"><path d="M2.6 8 H22.2" stroke="#000" stroke-width="2" stroke-linecap="round"/><path d="M8.35 8 V7 Q8.5 4 11.2 4 H14 Q16.7 4 16.85 7 V8" fill="none" stroke="#000" stroke-width="1.9"/><path d="M4.7 9 L5.4 23.7 Q5.6 25.7 7.6 25.7 H17.3 Q19.3 25.7 19.5 23.7 L20.2 9" fill="none" stroke="#000" stroke-width="2"/><path d="M8.4 12.4 V21.5 M12.5 12.4 V21.5 M16.5 12.4 V21.5" stroke="#000" stroke-width="1.7" stroke-linecap="round"/></svg>
<input type="checkbox" class="cb" style="top:626.18px">
<div class="td" style="left:342.5px;top:625.27px;letter-spacing:0.305px;">Digital Marketing Advance</div>
<div class="td" style="left:749.3px;top:625.27px;">Advance</div>
<div class="td" style="left:972.7px;top:625.27px;">4</div>
<div class="td" style="left:1164.7px;top:625.27px;">20</div>
<div class="td" style="left:1319.1px;top:625.27px;">20</div>
<div class="td bn" style="left:1487px;top:625.27px">1</div>
<svg style="position:absolute;left:1663.80px;top:622.18px" width="25" height="25" viewBox="0 0 25 25"><circle cx="12.5" cy="12.5" r="12.05" fill="#fe7388"/><polygon points="9.10,6.50 6.40,9.15 9.40,12.60 6.40,16.05 9.10,18.70 12.55,15.80 16.00,18.70 18.60,16.05 15.70,12.60 18.60,9.15 16.00,6.50 12.55,9.40" fill="#fff"/></svg>
<svg style="position:absolute;left:1782px;top:619.98px" width="28" height="28" viewBox="0 0 28 28"><path d="M10.4 3.4 H5.1 Q1.6 3.4 1.6 6.9 V21.2 Q1.6 24.7 5.1 24.7 H19.2 Q22.7 24.7 22.7 21.2 V16.1" fill="none" stroke="#17d397" stroke-width="2.5" stroke-linecap="round"/><path d="M8.9 18.5 H13.5 L25.2 6.6 L20.5 1.9 L8.9 13.4 Z" fill="none" stroke="#17d397" stroke-width="2.5" stroke-linejoin="miter"/></svg>
<svg style="position:absolute;left:1824px;top:619.48px" width="26" height="28" viewBox="0 0 26 28"><path d="M2.6 8 H22.2" stroke="#000" stroke-width="2" stroke-linecap="round"/><path d="M8.35 8 V7 Q8.5 4 11.2 4 H14 Q16.7 4 16.85 7 V8" fill="none" stroke="#000" stroke-width="1.9"/><path d="M4.7 9 L5.4 23.7 Q5.6 25.7 7.6 25.7 H17.3 Q19.3 25.7 19.5 23.7 L20.2 9" fill="none" stroke="#000" stroke-width="2"/><path d="M8.4 12.4 V21.5 M12.5 12.4 V21.5 M16.5 12.4 V21.5" stroke="#000" stroke-width="1.7" stroke-linecap="round"/></svg>
<input type="checkbox" class="cb" style="top:679.63px">
<div class="td" style="left:342.5px;top:678.73px;letter-spacing:0.109px;">Canva Graphic Design Advance</div>
<div class="td" style="left:749.3px;top:678.73px;">Advance</div>
<div class="td" style="left:972.7px;top:678.73px;">1</div>
<div class="td" style="left:1164.7px;top:678.73px;">30</div>
<div class="td" style="left:1319.1px;top:678.73px;">30</div>
<div class="td bn" style="left:1487px;top:678.73px">2</div>
<svg style="position:absolute;left:1663.80px;top:675.63px" width="25" height="25" viewBox="0 0 25 25"><circle cx="12.5" cy="12.5" r="12.05" fill="#17d397"/><polygon points="4.50,13.05 7.10,10.75 11.10,14.65 18.20,7.75 20.60,10.15 11.10,19.55" fill="#fff"/></svg>
<svg style="position:absolute;left:1782px;top:673.43px" width="28" height="28" viewBox="0 0 28 28"><path d="M10.4 3.4 H5.1 Q1.6 3.4 1.6 6.9 V21.2 Q1.6 24.7 5.1 24.7 H19.2 Q22.7 24.7 22.7 21.2 V16.1" fill="none" stroke="#17d397" stroke-width="2.5" stroke-linecap="round"/><path d="M8.9 18.5 H13.5 L25.2 6.6 L20.5 1.9 L8.9 13.4 Z" fill="none" stroke="#17d397" stroke-width="2.5" stroke-linejoin="miter"/></svg>
<svg style="position:absolute;left:1824px;top:672.93px" width="26" height="28" viewBox="0 0 26 28"><path d="M2.6 8 H22.2" stroke="#000" stroke-width="2" stroke-linecap="round"/><path d="M8.35 8 V7 Q8.5 4 11.2 4 H14 Q16.7 4 16.85 7 V8" fill="none" stroke="#000" stroke-width="1.9"/><path d="M4.7 9 L5.4 23.7 Q5.6 25.7 7.6 25.7 H17.3 Q19.3 25.7 19.5 23.7 L20.2 9" fill="none" stroke="#000" stroke-width="2"/><path d="M8.4 12.4 V21.5 M12.5 12.4 V21.5 M16.5 12.4 V21.5" stroke="#000" stroke-width="1.7" stroke-linecap="round"/></svg>
<input type="checkbox" class="cb" style="top:733.08px">
<div class="td" style="left:342.5px;top:732.18px;letter-spacing:0.288px;">Spoken English Intermediate</div>
<div class="td" style="left:749.3px;top:732.18px;letter-spacing:0.55px;">Intermidiate</div>
<div class="td" style="left:972.7px;top:732.18px;">1</div>
<div class="td" style="left:1164.7px;top:732.18px;">45</div>
<div class="td" style="left:1319.1px;top:732.18px;">45</div>
<div class="td bn" style="left:1487px;top:732.18px">4</div>
<svg style="position:absolute;left:1663.80px;top:729.08px" width="25" height="25" viewBox="0 0 25 25"><circle cx="12.5" cy="12.5" r="12.05" fill="#17d397"/><polygon points="4.50,13.05 7.10,10.75 11.10,14.65 18.20,7.75 20.60,10.15 11.10,19.55" fill="#fff"/></svg>
<svg style="position:absolute;left:1782px;top:726.88px" width="28" height="28" viewBox="0 0 28 28"><path d="M10.4 3.4 H5.1 Q1.6 3.4 1.6 6.9 V21.2 Q1.6 24.7 5.1 24.7 H19.2 Q22.7 24.7 22.7 21.2 V16.1" fill="none" stroke="#17d397" stroke-width="2.5" stroke-linecap="round"/><path d="M8.9 18.5 H13.5 L25.2 6.6 L20.5 1.9 L8.9 13.4 Z" fill="none" stroke="#17d397" stroke-width="2.5" stroke-linejoin="miter"/></svg>
<svg style="position:absolute;left:1824px;top:726.38px" width="26" height="28" viewBox="0 0 26 28"><path d="M2.6 8 H22.2" stroke="#000" stroke-width="2" stroke-linecap="round"/><path d="M8.35 8 V7 Q8.5 4 11.2 4 H14 Q16.7 4 16.85 7 V8" fill="none" stroke="#000" stroke-width="1.9"/><path d="M4.7 9 L5.4 23.7 Q5.6 25.7 7.6 25.7 H17.3 Q19.3 25.7 19.5 23.7 L20.2 9" fill="none" stroke="#000" stroke-width="2"/><path d="M8.4 12.4 V21.5 M12.5 12.4 V21.5 M16.5 12.4 V21.5" stroke="#000" stroke-width="1.7" stroke-linecap="round"/></svg>
<input type="checkbox" class="cb" style="top:786.53px">
<div class="td" style="left:342.5px;top:785.62px;letter-spacing:0.123px;">Excel Mastery</div>
<div class="td" style="left:749.3px;top:785.62px;">Advance</div>
<div class="td" style="left:972.7px;top:785.62px;">1</div>
<div class="td" style="left:1164.7px;top:785.62px;">30</div>
<div class="td" style="left:1319.1px;top:785.62px;">30</div>
<div class="td bn" style="left:1487px;top:785.62px">3</div>
<svg style="position:absolute;left:1663.80px;top:782.53px" width="25" height="25" viewBox="0 0 25 25"><circle cx="12.5" cy="12.5" r="12.05" fill="#17d397"/><polygon points="4.50,13.05 7.10,10.75 11.10,14.65 18.20,7.75 20.60,10.15 11.10,19.55" fill="#fff"/></svg>
<svg style="position:absolute;left:1782px;top:780.33px" width="28" height="28" viewBox="0 0 28 28"><path d="M10.4 3.4 H5.1 Q1.6 3.4 1.6 6.9 V21.2 Q1.6 24.7 5.1 24.7 H19.2 Q22.7 24.7 22.7 21.2 V16.1" fill="none" stroke="#17d397" stroke-width="2.5" stroke-linecap="round"/><path d="M8.9 18.5 H13.5 L25.2 6.6 L20.5 1.9 L8.9 13.4 Z" fill="none" stroke="#17d397" stroke-width="2.5" stroke-linejoin="miter"/></svg>
<svg style="position:absolute;left:1824px;top:779.83px" width="26" height="28" viewBox="0 0 26 28"><path d="M2.6 8 H22.2" stroke="#000" stroke-width="2" stroke-linecap="round"/><path d="M8.35 8 V7 Q8.5 4 11.2 4 H14 Q16.7 4 16.85 7 V8" fill="none" stroke="#000" stroke-width="1.9"/><path d="M4.7 9 L5.4 23.7 Q5.6 25.7 7.6 25.7 H17.3 Q19.3 25.7 19.5 23.7 L20.2 9" fill="none" stroke="#000" stroke-width="2"/><path d="M8.4 12.4 V21.5 M12.5 12.4 V21.5 M16.5 12.4 V21.5" stroke="#000" stroke-width="1.7" stroke-linecap="round"/></svg>
<input type="checkbox" class="cb" style="top:839.98px">
<div class="td" style="left:342.5px;top:839.07px;letter-spacing:0.383px;">API Automation</div>
<div class="td" style="left:749.3px;top:839.07px;letter-spacing:-0.15px;">Basic</div>
<div class="td" style="left:972.7px;top:839.07px;">1</div>
<div class="td" style="left:1164.7px;top:839.07px;">28</div>
<div class="td" style="left:1319.1px;top:839.07px;">28</div>
<div class="td bn" style="left:1487px;top:839.07px">1</div>
<svg style="position:absolute;left:1663.80px;top:835.98px" width="25" height="25" viewBox="0 0 25 25"><circle cx="12.5" cy="12.5" r="12.05" fill="#fe7388"/><polygon points="9.10,6.50 6.40,9.15 9.40,12.60 6.40,16.05 9.10,18.70 12.55,15.80 16.00,18.70 18.60,16.05 15.70,12.60 18.60,9.15 16.00,6.50 12.55,9.40" fill="#fff"/></svg>
<svg style="position:absolute;left:1782px;top:833.77px" width="28" height="28" viewBox="0 0 28 28"><path d="M10.4 3.4 H5.1 Q1.6 3.4 1.6 6.9 V21.2 Q1.6 24.7 5.1 24.7 H19.2 Q22.7 24.7 22.7 21.2 V16.1" fill="none" stroke="#17d397" stroke-width="2.5" stroke-linecap="round"/><path d="M8.9 18.5 H13.5 L25.2 6.6 L20.5 1.9 L8.9 13.4 Z" fill="none" stroke="#17d397" stroke-width="2.5" stroke-linejoin="miter"/></svg>
<svg style="position:absolute;left:1824px;top:833.27px" width="26" height="28" viewBox="0 0 26 28"><path d="M2.6 8 H22.2" stroke="#000" stroke-width="2" stroke-linecap="round"/><path d="M8.35 8 V7 Q8.5 4 11.2 4 H14 Q16.7 4 16.85 7 V8" fill="none" stroke="#000" stroke-width="1.9"/><path d="M4.7 9 L5.4 23.7 Q5.6 25.7 7.6 25.7 H17.3 Q19.3 25.7 19.5 23.7 L20.2 9" fill="none" stroke="#000" stroke-width="2"/><path d="M8.4 12.4 V21.5 M12.5 12.4 V21.5 M16.5 12.4 V21.5" stroke="#000" stroke-width="1.7" stroke-linecap="round"/></svg>
<input type="checkbox" class="cb" style="top:893.43px">
<div class="td" style="left:342.5px;top:892.52px;letter-spacing:0.484px;">Funnel Automation</div>
<div class="td" style="left:749.3px;top:892.52px;letter-spacing:-0.15px;">Basic</div>
<div class="td" style="left:972.7px;top:892.52px;">6</div>
<div class="td" style="left:1164.7px;top:892.52px;">28</div>
<div class="td" style="left:1319.1px;top:892.52px;">28</div>
<div class="td bn" style="left:1487px;top:892.52px">1</div>
<svg style="position:absolute;left:1663.80px;top:889.43px" width="25" height="25" viewBox="0 0 25 25"><circle cx="12.5" cy="12.5" r="12.05" fill="#fe7388"/><polygon points="9.10,6.50 6.40,9.15 9.40,12.60 6.40,16.05 9.10,18.70 12.55,15.80 16.00,18.70 18.60,16.05 15.70,12.60 18.60,9.15 16.00,6.50 12.55,9.40" fill="#fff"/></svg>
<svg style="position:absolute;left:1782px;top:887.23px" width="28" height="28" viewBox="0 0 28 28"><path d="M10.4 3.4 H5.1 Q1.6 3.4 1.6 6.9 V21.2 Q1.6 24.7 5.1 24.7 H19.2 Q22.7 24.7 22.7 21.2 V16.1" fill="none" stroke="#17d397" stroke-width="2.5" stroke-linecap="round"/><path d="M8.9 18.5 H13.5 L25.2 6.6 L20.5 1.9 L8.9 13.4 Z" fill="none" stroke="#17d397" stroke-width="2.5" stroke-linejoin="miter"/></svg>
<svg style="position:absolute;left:1824px;top:886.73px" width="26" height="28" viewBox="0 0 26 28"><path d="M2.6 8 H22.2" stroke="#000" stroke-width="2" stroke-linecap="round"/><path d="M8.35 8 V7 Q8.5 4 11.2 4 H14 Q16.7 4 16.85 7 V8" fill="none" stroke="#000" stroke-width="1.9"/><path d="M4.7 9 L5.4 23.7 Q5.6 25.7 7.6 25.7 H17.3 Q19.3 25.7 19.5 23.7 L20.2 9" fill="none" stroke="#000" stroke-width="2"/><path d="M8.4 12.4 V21.5 M12.5 12.4 V21.5 M16.5 12.4 V21.5" stroke="#000" stroke-width="1.7" stroke-linecap="round"/></svg>
<input type="checkbox" class="cb" style="top:946.88px">
<div class="td" style="left:342.5px;top:945.98px;letter-spacing:0.179px;">Landing Page Building</div>
<div class="td" style="left:749.3px;top:945.98px;letter-spacing:-0.15px;">Basic</div>
<div class="td" style="left:972.7px;top:945.98px;">6</div>
<div class="td" style="left:1164.7px;top:945.98px;">28</div>
<div class="td" style="left:1319.1px;top:945.98px;">28</div>
<div class="td bn" style="left:1487px;top:945.98px">1</div>
<svg style="position:absolute;left:1663.80px;top:942.88px" width="25" height="25" viewBox="0 0 25 25"><circle cx="12.5" cy="12.5" r="12.05" fill="#fe7388"/><polygon points="9.10,6.50 6.40,9.15 9.40,12.60 6.40,16.05 9.10,18.70 12.55,15.80 16.00,18.70 18.60,16.05 15.70,12.60 18.60,9.15 16.00,6.50 12.55,9.40" fill="#fff"/></svg>
<svg style="position:absolute;left:1782px;top:940.68px" width="28" height="28" viewBox="0 0 28 28"><path d="M10.4 3.4 H5.1 Q1.6 3.4 1.6 6.9 V21.2 Q1.6 24.7 5.1 24.7 H19.2 Q22.7 24.7 22.7 21.2 V16.1" fill="none" stroke="#17d397" stroke-width="2.5" stroke-linecap="round"/><path d="M8.9 18.5 H13.5 L25.2 6.6 L20.5 1.9 L8.9 13.4 Z" fill="none" stroke="#17d397" stroke-width="2.5" stroke-linejoin="miter"/></svg>
<svg style="position:absolute;left:1824px;top:940.18px" width="26" height="28" viewBox="0 0 26 28"><path d="M2.6 8 H22.2" stroke="#000" stroke-width="2" stroke-linecap="round"/><path d="M8.35 8 V7 Q8.5 4 11.2 4 H14 Q16.7 4 16.85 7 V8" fill="none" stroke="#000" stroke-width="1.9"/><path d="M4.7 9 L5.4 23.7 Q5.6 25.7 7.6 25.7 H17.3 Q19.3 25.7 19.5 23.7 L20.2 9" fill="none" stroke="#000" stroke-width="2"/><path d="M8.4 12.4 V21.5 M12.5 12.4 V21.5 M16.5 12.4 V21.5" stroke="#000" stroke-width="1.7" stroke-linecap="round"/></svg>
<input type="checkbox" class="cb" style="top:1000.33px">
<div class="td" style="left:342.5px;top:999.43px;letter-spacing:0.097px;">Facebook Ads</div>
<div class="td" style="left:749.3px;top:999.43px;letter-spacing:-0.15px;">Basic</div>
<div class="td" style="left:972.7px;top:999.43px;">5</div>
<div class="td" style="left:1164.7px;top:999.43px;">28</div>
<div class="td" style="left:1319.1px;top:999.43px;">28</div>
<div class="td bn" style="left:1487px;top:999.43px">1</div>
<svg style="position:absolute;left:1663.80px;top:996.33px" width="25" height="25" viewBox="0 0 25 25"><circle cx="12.5" cy="12.5" r="12.05" fill="#fe7388"/><polygon points="9.10,6.50 6.40,9.15 9.40,12.60 6.40,16.05 9.10,18.70 12.55,15.80 16.00,18.70 18.60,16.05 15.70,12.60 18.60,9.15 16.00,6.50 12.55,9.40" fill="#fff"/></svg>
<svg style="position:absolute;left:1782px;top:994.13px" width="28" height="28" viewBox="0 0 28 28"><path d="M10.4 3.4 H5.1 Q1.6 3.4 1.6 6.9 V21.2 Q1.6 24.7 5.1 24.7 H19.2 Q22.7 24.7 22.7 21.2 V16.1" fill="none" stroke="#17d397" stroke-width="2.5" stroke-linecap="round"/><path d="M8.9 18.5 H13.5 L25.2 6.6 L20.5 1.9 L8.9 13.4 Z" fill="none" stroke="#17d397" stroke-width="2.5" stroke-linejoin="miter"/></svg>
<svg style="position:absolute;left:1824px;top:993.63px" width="26" height="28" viewBox="0 0 26 28"><path d="M2.6 8 H22.2" stroke="#000" stroke-width="2" stroke-linecap="round"/><path d="M8.35 8 V7 Q8.5 4 11.2 4 H14 Q16.7 4 16.85 7 V8" fill="none" stroke="#000" stroke-width="1.9"/><path d="M4.7 9 L5.4 23.7 Q5.6 25.7 7.6 25.7 H17.3 Q19.3 25.7 19.5 23.7 L20.2 9" fill="none" stroke="#000" stroke-width="2"/><path d="M8.4 12.4 V21.5 M12.5 12.4 V21.5 M16.5 12.4 V21.5" stroke="#000" stroke-width="1.7" stroke-linecap="round"/></svg>
<input type="checkbox" class="cb" style="top:1053.77px">
<div class="td" style="left:342.5px;top:1052.87px;letter-spacing:0.062px;">Spoken English</div>
<div class="td" style="left:749.3px;top:1052.87px;letter-spacing:-0.15px;">Basic</div>
<div class="td" style="left:972.7px;top:1052.87px;">5</div>
<div class="td" style="left:1164.7px;top:1052.87px;">28</div>
<div class="td" style="left:1319.1px;top:1052.87px;">28</div>
<div class="td bn" style="left:1487px;top:1052.87px">1</div>
<svg style="position:absolute;left:1663.80px;top:1049.77px" width="25" height="25" viewBox="0 0 25 25"><circle cx="12.5" cy="12.5" r="12.05" fill="#fe7388"/><polygon points="9.10,6.50 6.40,9.15 9.40,12.60 6.40,16.05 9.10,18.70 12.55,15.80 16.00,18.70 18.60,16.05 15.70,12.60 18.60,9.15 16.00,6.50 12.55,9.40" fill="#fff"/></svg>
<svg style="position:absolute;left:1782px;top:1047.57px" width="28" height="28" viewBox="0 0 28 28"><path d="M10.4 3.4 H5.1 Q1.6 3.4 1.6 6.9 V21.2 Q1.6 24.7 5.1 24.7 H19.2 Q22.7 24.7 22.7 21.2 V16.1" fill="none" stroke="#17d397" stroke-width="2.5" stroke-linecap="round"/><path d="M8.9 18.5 H13.5 L25.2 6.6 L20.5 1.9 L8.9 13.4 Z" fill="none" stroke="#17d397" stroke-width="2.5" stroke-linejoin="miter"/></svg>
<svg style="position:absolute;left:1824px;top:1047.07px" width="26" height="28" viewBox="0 0 26 28"><path d="M2.6 8 H22.2" stroke="#000" stroke-width="2" stroke-linecap="round"/><path d="M8.35 8 V7 Q8.5 4 11.2 4 H14 Q16.7 4 16.85 7 V8" fill="none" stroke="#000" stroke-width="1.9"/><path d="M4.7 9 L5.4 23.7 Q5.6 25.7 7.6 25.7 H17.3 Q19.3 25.7 19.5 23.7 L20.2 9" fill="none" stroke="#000" stroke-width="2"/><path d="M8.4 12.4 V21.5 M12.5 12.4 V21.5 M16.5 12.4 V21.5" stroke="#000" stroke-width="1.7" stroke-linecap="round"/></svg>
<input type="checkbox" class="cb" style="top:1107.23px">
<div class="td" style="left:342.5px;top:1106.33px;letter-spacing:0.338px;">Website Building</div>
<div class="td" style="left:749.3px;top:1106.33px;letter-spacing:-0.15px;">Basic</div>
<div class="td" style="left:972.7px;top:1106.33px;">7</div>
<div class="td" style="left:1164.7px;top:1106.33px;">28</div>
<div class="td" style="left:1319.1px;top:1106.33px;">28</div>
<div class="td bn" style="left:1487px;top:1106.33px">1</div>
<svg style="position:absolute;left:1663.80px;top:1103.23px" width="25" height="25" viewBox="0 0 25 25"><circle cx="12.5" cy="12.5" r="12.05" fill="#fe7388"/><polygon points="9.10,6.50 6.40,9.15 9.40,12.60 6.40,16.05 9.10,18.70 12.55,15.80 16.00,18.70 18.60,16.05 15.70,12.60 18.60,9.15 16.00,6.50 12.55,9.40" fill="#fff"/></svg>
<svg style="position:absolute;left:1782px;top:1101.03px" width="28" height="28" viewBox="0 0 28 28"><path d="M10.4 3.4 H5.1 Q1.6 3.4 1.6 6.9 V21.2 Q1.6 24.7 5.1 24.7 H19.2 Q22.7 24.7 22.7 21.2 V16.1" fill="none" stroke="#17d397" stroke-width="2.5" stroke-linecap="round"/><path d="M8.9 18.5 H13.5 L25.2 6.6 L20.5 1.9 L8.9 13.4 Z" fill="none" stroke="#17d397" stroke-width="2.5" stroke-linejoin="miter"/></svg>
<svg style="position:absolute;left:1824px;top:1100.53px" width="26" height="28" viewBox="0 0 26 28"><path d="M2.6 8 H22.2" stroke="#000" stroke-width="2" stroke-linecap="round"/><path d="M8.35 8 V7 Q8.5 4 11.2 4 H14 Q16.7 4 16.85 7 V8" fill="none" stroke="#000" stroke-width="1.9"/><path d="M4.7 9 L5.4 23.7 Q5.6 25.7 7.6 25.7 H17.3 Q19.3 25.7 19.5 23.7 L20.2 9" fill="none" stroke="#000" stroke-width="2"/><path d="M8.4 12.4 V21.5 M12.5 12.4 V21.5 M16.5 12.4 V21.5" stroke="#000" stroke-width="1.7" stroke-linecap="round"/></svg>
<input type="checkbox" class="cb" style="top:1160.67px">
<div class="td" style="left:342.5px;top:1159.77px;letter-spacing:0.177px;">GA4 Advance: A Beginner&#x27;s Guide To Analytics</div>
<div class="td" style="left:749.3px;top:1159.77px;">Advance</div>
<div class="td" style="left:972.7px;top:1159.77px;">5</div>
<div class="td" style="left:1164.7px;top:1159.77px;">10</div>
<div class="td" style="left:1319.1px;top:1159.77px;">10</div>
<div class="td bn" style="left:1487px;top:1159.77px">1</div>
<svg style="position:absolute;left:1663.80px;top:1156.67px" width="25" height="25" viewBox="0 0 25 25"><circle cx="12.5" cy="12.5" r="12.05" fill="#fe7388"/><polygon points="9.10,6.50 6.40,9.15 9.40,12.60 6.40,16.05 9.10,18.70 12.55,15.80 16.00,18.70 18.60,16.05 15.70,12.60 18.60,9.15 16.00,6.50 12.55,9.40" fill="#fff"/></svg>
<svg style="position:absolute;left:1782px;top:1154.47px" width="28" height="28" viewBox="0 0 28 28"><path d="M10.4 3.4 H5.1 Q1.6 3.4 1.6 6.9 V21.2 Q1.6 24.7 5.1 24.7 H19.2 Q22.7 24.7 22.7 21.2 V16.1" fill="none" stroke="#17d397" stroke-width="2.5" stroke-linecap="round"/><path d="M8.9 18.5 H13.5 L25.2 6.6 L20.5 1.9 L8.9 13.4 Z" fill="none" stroke="#17d397" stroke-width="2.5" stroke-linejoin="miter"/></svg>
<svg style="position:absolute;left:1824px;top:1153.97px" width="26" height="28" viewBox="0 0 26 28"><path d="M2.6 8 H22.2" stroke="#000" stroke-width="2" stroke-linecap="round"/><path d="M8.35 8 V7 Q8.5 4 11.2 4 H14 Q16.7 4 16.85 7 V8" fill="none" stroke="#000" stroke-width="1.9"/><path d="M4.7 9 L5.4 23.7 Q5.6 25.7 7.6 25.7 H17.3 Q19.3 25.7 19.5 23.7 L20.2 9" fill="none" stroke="#000" stroke-width="2"/><path d="M8.4 12.4 V21.5 M12.5 12.4 V21.5 M16.5 12.4 V21.5" stroke="#000" stroke-width="1.7" stroke-linecap="round"/></svg>
<input type="checkbox" class="cb" style="top:1214.12px">
<div class="td" style="left:342.5px;top:1213.22px;letter-spacing:0.223px;">Web Development Basic</div>
<div class="td" style="left:749.3px;top:1213.22px;letter-spacing:-0.15px;">Basic</div>
<div class="td" style="left:972.7px;top:1213.22px;">5</div>
<div class="td" style="left:1164.7px;top:1213.22px;">18</div>
<div class="td" style="left:1319.1px;top:1213.22px;">18</div>
<div class="td bn" style="left:1487px;top:1213.22px">1</div>
<svg style="position:absolute;left:1663.80px;top:1210.12px" width="25" height="25" viewBox="0 0 25 25"><circle cx="12.5" cy="12.5" r="12.05" fill="#fe7388"/><polygon points="9.10,6.50 6.40,9.15 9.40,12.60 6.40,16.05 9.10,18.70 12.55,15.80 16.00,18.70 18.60,16.05 15.70,12.60 18.60,9.15 16.00,6.50 12.55,9.40" fill="#fff"/></svg>
<svg style="position:absolute;left:1782px;top:1207.92px" width="28" height="28" viewBox="0 0 28 28"><path d="M10.4 3.4 H5.1 Q1.6 3.4 1.6 6.9 V21.2 Q1.6 24.7 5.1 24.7 H19.2 Q22.7 24.7 22.7 21.2 V16.1" fill="none" stroke="#17d397" stroke-width="2.5" stroke-linecap="round"/><path d="M8.9 18.5 H13.5 L25.2 6.6 L20.5 1.9 L8.9 13.4 Z" fill="none" stroke="#17d397" stroke-width="2.5" stroke-linejoin="miter"/></svg>
<svg style="position:absolute;left:1824px;top:1207.42px" width="26" height="28" viewBox="0 0 26 28"><path d="M2.6 8 H22.2" stroke="#000" stroke-width="2" stroke-linecap="round"/><path d="M8.35 8 V7 Q8.5 4 11.2 4 H14 Q16.7 4 16.85 7 V8" fill="none" stroke="#000" stroke-width="1.9"/><path d="M4.7 9 L5.4 23.7 Q5.6 25.7 7.6 25.7 H17.3 Q19.3 25.7 19.5 23.7 L20.2 9" fill="none" stroke="#000" stroke-width="2"/><path d="M8.4 12.4 V21.5 M12.5 12.4 V21.5 M16.5 12.4 V21.5" stroke="#000" stroke-width="1.7" stroke-linecap="round"/></svg>
<input type="checkbox" class="cb" style="top:1267.58px">
<div class="td" style="left:342.5px;top:1266.67px;letter-spacing:0.092px;">English Language For Beginners</div>
<div class="td" style="left:749.3px;top:1266.67px;letter-spacing:-0.15px;">Basic</div>
<div class="td" style="left:972.7px;top:1266.67px;letter-spacing:0.6px;">12/10</div>
<div class="td" style="left:1164.7px;top:1266.67px;">20</div>
<div class="td" style="left:1319.1px;top:1266.67px;">20</div>
<div class="td bn" style="left:1487px;top:1266.67px">1</div>
<svg style="position:absolute;left:1663.80px;top:1263.58px" width="25" height="25" viewBox="0 0 25 25"><circle cx="12.5" cy="12.5" r="12.05" fill="#fe7388"/><polygon points="9.10,6.50 6.40,9.15 9.40,12.60 6.40,16.05 9.10,18.70 12.55,15.80 16.00,18.70 18.60,16.05 15.70,12.60 18.60,9.15 16.00,6.50 12.55,9.40" fill="#fff"/></svg>
<svg style="position:absolute;left:1782px;top:1261.38px" width="28" height="28" viewBox="0 0 28 28"><path d="M10.4 3.4 H5.1 Q1.6 3.4 1.6 6.9 V21.2 Q1.6 24.7 5.1 24.7 H19.2 Q22.7 24.7 22.7 21.2 V16.1" fill="none" stroke="#17d397" stroke-width="2.5" stroke-linecap="round"/><path d="M8.9 18.5 H13.5 L25.2 6.6 L20.5 1.9 L8.9 13.4 Z" fill="none" stroke="#17d397" stroke-width="2.5" stroke-linejoin="miter"/></svg>
<svg style="position:absolute;left:1824px;top:1260.88px" width="26" height="28" viewBox="0 0 26 28"><path d="M2.6 8 H22.2" stroke="#000" stroke-width="2" stroke-linecap="round"/><path d="M8.35 8 V7 Q8.5 4 11.2 4 H14 Q16.7 4 16.85 7 V8" fill="none" stroke="#000" stroke-width="1.9"/><path d="M4.7 9 L5.4 23.7 Q5.6 25.7 7.6 25.7 H17.3 Q19.3 25.7 19.5 23.7 L20.2 9" fill="none" stroke="#000" stroke-width="2"/><path d="M8.4 12.4 V21.5 M12.5 12.4 V21.5 M16.5 12.4 V21.5" stroke="#000" stroke-width="1.7" stroke-linecap="round"/></svg>
<input type="checkbox" class="cb" style="top:1321.02px">
<div class="td" style="left:342.5px;top:1320.12px;letter-spacing:0.128px;">GA4 Basics: A Beginner&#x27;s Guide To Analytics</div>
<div class="td" style="left:749.3px;top:1320.12px;letter-spacing:-0.15px;">Basic</div>
<div class="td" style="left:972.7px;top:1320.12px;">6</div>
<div class="td" style="left:1164.7px;top:1320.12px;">8</div>
<div class="td" style="left:1319.1px;top:1320.12px;">8</div>
<div class="td bn" style="left:1487px;top:1320.12px">1</div>
<svg style="position:absolute;left:1663.80px;top:1317.02px" width="25" height="25" viewBox="0 0 25 25"><circle cx="12.5" cy="12.5" r="12.05" fill="#fe7388"/><polygon points="9.10,6.50 6.40,9.15 9.40,12.60 6.40,16.05 9.10,18.70 12.55,15.80 16.00,18.70 18.60,16.05 15.70,12.60 18.60,9.15 16.00,6.50 12.55,9.40" fill="#fff"/></svg>
<svg style="position:absolute;left:1782px;top:1314.82px" width="28" height="28" viewBox="0 0 28 28"><path d="M10.4 3.4 H5.1 Q1.6 3.4 1.6 6.9 V21.2 Q1.6 24.7 5.1 24.7 H19.2 Q22.7 24.7 22.7 21.2 V16.1" fill="none" stroke="#17d397" stroke-width="2.5" stroke-linecap="round"/><path d="M8.9 18.5 H13.5 L25.2 6.6 L20.5 1.9 L8.9 13.4 Z" fill="none" stroke="#17d397" stroke-width="2.5" stroke-linejoin="miter"/></svg>
<svg style="position:absolute;left:1824px;top:1314.32px" width="26" height="28" viewBox="0 0 26 28"><path d="M2.6 8 H22.2" stroke="#000" stroke-width="2" stroke-linecap="round"/><path d="M8.35 8 V7 Q8.5 4 11.2 4 H14 Q16.7 4 16.85 7 V8" fill="none" stroke="#000" stroke-width="1.9"/><path d="M4.7 9 L5.4 23.7 Q5.6 25.7 7.6 25.7 H17.3 Q19.3 25.7 19.5 23.7 L20.2 9" fill="none" stroke="#000" stroke-width="2"/><path d="M8.4 12.4 V21.5 M12.5 12.4 V21.5 M16.5 12.4 V21.5" stroke="#000" stroke-width="1.7" stroke-linecap="round"/></svg>
<input type="checkbox" class="cb" style="top:1374.48px">
<div class="td" style="left:342.5px;top:1373.58px;letter-spacing:0.124px;">Sales Expert Program</div>
<div class="td" style="left:749.3px;top:1373.58px;letter-spacing:-0.15px;">Basic</div>
<div class="td" style="left:972.7px;top:1373.58px;">1</div>
<div class="td" style="left:1164.7px;top:1373.58px;">15</div>
<div class="td" style="left:1319.1px;top:1373.58px;">15</div>
<div class="td bn" style="left:1487px;top:1373.58px">1</div>
<svg style="position:absolute;left:1663.80px;top:1370.48px" width="25" height="25" viewBox="0 0 25 25"><circle cx="12.5" cy="12.5" r="12.05" fill="#17d397"/><polygon points="4.50,13.05 7.10,10.75 11.10,14.65 18.20,7.75 20.60,10.15 11.10,19.55" fill="#fff"/></svg>
<svg style="position:absolute;left:1782px;top:1368.28px" width="28" height="28" viewBox="0 0 28 28"><path d="M10.4 3.4 H5.1 Q1.6 3.4 1.6 6.9 V21.2 Q1.6 24.7 5.1 24.7 H19.2 Q22.7 24.7 22.7 21.2 V16.1" fill="none" stroke="#17d397" stroke-width="2.5" stroke-linecap="round"/><path d="M8.9 18.5 H13.5 L25.2 6.6 L20.5 1.9 L8.9 13.4 Z" fill="none" stroke="#17d397" stroke-width="2.5" stroke-linejoin="miter"/></svg>
<svg style="position:absolute;left:1824px;top:1367.78px" width="26" height="28" viewBox="0 0 26 28"><path d="M2.6 8 H22.2" stroke="#000" stroke-width="2" stroke-linecap="round"/><path d="M8.35 8 V7 Q8.5 4 11.2 4 H14 Q16.7 4 16.85 7 V8" fill="none" stroke="#000" stroke-width="1.9"/><path d="M4.7 9 L5.4 23.7 Q5.6 25.7 7.6 25.7 H17.3 Q19.3 25.7 19.5 23.7 L20.2 9" fill="none" stroke="#000" stroke-width="2"/><path d="M8.4 12.4 V21.5 M12.5 12.4 V21.5 M16.5 12.4 V21.5" stroke="#000" stroke-width="1.7" stroke-linecap="round"/></svg>
<div class="show">Showing 1-20 (33 records)</div>
<div class="pg" style="left:1476px">&laquo;</div>
<div class="pg" style="left:1531px">&lsaquo;</div>
<div class="pg act" style="left:1585px">1</div>
<div class="pg" style="left:1640px">2</div>
<div class="pg" style="left:1695px">&rsaquo;</div>
<div class="pg" style="left:1749px">&raquo;</div>
<div class="sel"><span>20</span><svg style="position:absolute;left:47px;top:13px" width="10" height="8" viewBox="0 0 10 8"><path d="M1.3 1.6 L5 5.2 L8.7 1.6" fill="none" stroke="#000" stroke-width="1.8"/></svg></div>
<div class="footer"><span>Copyright © 2025 <a>AT&amp;T Education</a> , All rights reserved.</span></div>
<div class="bline"></div>
</body></html>
